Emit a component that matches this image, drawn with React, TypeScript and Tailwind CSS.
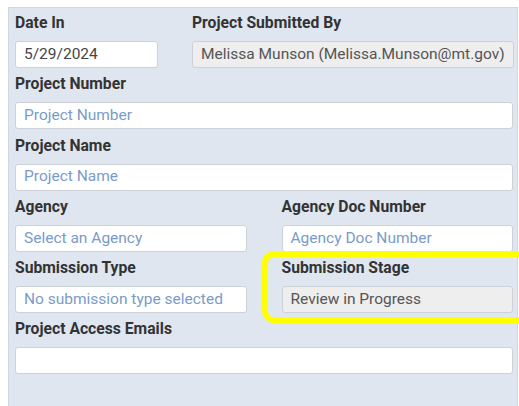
import React from 'react'

type FieldProps = {
  label: string
  value?: string
  placeholder?: string
  disabled?: boolean
}

function Field({ label, value, placeholder, disabled }: FieldProps) {
  return (
    <div className="flex flex-col">
      <label className="h-[20px] mb-[8px] text-[15.7px] leading-[20px] font-bold text-[#333333] whitespace-nowrap">
        {label}
      </label>
      <div
        className={`h-[27px] rounded-[3px] border border-[#cdd2d8] px-[8px] flex items-center text-[15.5px] whitespace-nowrap overflow-hidden ${
          disabled ? 'bg-[#eeeeee] text-[#555555]' : 'bg-white text-[#444444]'
        }`}
      >
        {value ? value : <span className="text-[#7a9bc8]">{placeholder}</span>}
      </div>
    </div>
  )
}

export default function App() {
  return (
    <div className="w-[519px] h-[406px] bg-white overflow-hidden pt-[7px] pl-[8px] font-['Roboto',sans-serif]">
      <div className="relative w-[510px] h-[420px] bg-[#dfe6ef] border border-[#cfd7e1] pt-[5px] pl-[6px] pr-[4px]">
        <div className="flex flex-col gap-[6.3px]">
          <div className="grid grid-cols-[143px_1fr] gap-x-[34px]">
            <Field label="Date In" value="5/29/2024" />
            <Field label="Project Submitted By" value="Melissa Munson (Melissa.Munson@mt.gov)" disabled />
          </div>
          <Field label="Project Number" placeholder="Project Number" />
          <Field label="Project Name" placeholder="Project Name" />
          <div className="grid grid-cols-2 gap-x-[35px]">
            <Field label="Agency" placeholder="Select an Agency" />
            <Field label="Agency Doc Number" placeholder="Agency Doc Number" />
          </div>
          <div className="grid grid-cols-2 gap-x-[35px]">
            <Field label="Submission Type" placeholder="No submission type selected" />
            <Field label="Submission Stage" value="Review in Progress" disabled />
          </div>
          <Field label="Project Access Emails" />
        </div>

        {/* highlight around the stage field */}
        <div className="absolute left-[253px] top-[243px] w-[270px] h-[72px] rounded-[12px] border-[6px] border-[#ffff00]" />
      </div>
    </div>
  )
}
